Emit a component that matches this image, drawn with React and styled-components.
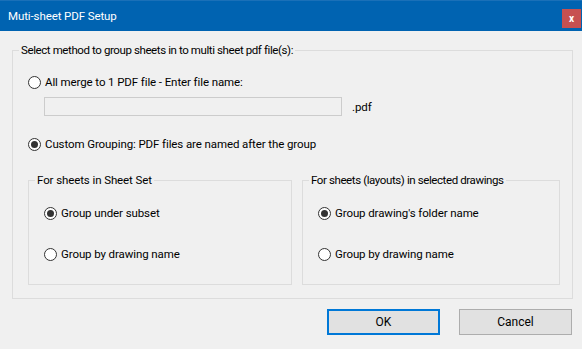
import React from 'react'
import styled, { createGlobalStyle } from 'styled-components'

const GlobalStyle = createGlobalStyle`
  html, body {
    margin: 0;
    padding: 0;
    background: #f0f0f0;
  }
  body {
    font-family: Roboto, "Liberation Sans", sans-serif;
    font-size: 11.5px;
    letter-spacing: -0.1px;
    color: #000;
  }
`

const App = () => {
  const [mode, setMode] = React.useState('custom')
  const [sheetSet, setSheetSet] = React.useState('subset')
  const [layouts, setLayouts] = React.useState('folder')

  return (
    <Window>
      <GlobalStyle />
      <TitleBar>
        <Title>Muti-sheet PDF Setup</Title>
        <CloseButton>x</CloseButton>
      </TitleBar>

      <Content>
        <Group>
          <Legend tight>Select method to group sheets in to multi sheet pdf file(s):</Legend>
          <GroupBody>
            <Radio
              label="All merge to 1 PDF file - Enter file name:"
              checked={mode === 'merge'}
              onChange={() => setMode('merge')}
            />
            <InputRow>
              <FileInput disabled />
              <Suffix>.pdf</Suffix>
            </InputRow>
            <Radio
              label="Custom Grouping: PDF files are named after the group"
              checked={mode === 'custom'}
              onChange={() => setMode('custom')}
              spaced
            />
            <SubGroups>
              <SubGroup width="264px">
                <Legend>For sheets in Sheet Set</Legend>
                <SubGroupBody>
                  <Radio
                    label="Group under subset"
                    checked={sheetSet === 'subset'}
                    onChange={() => setSheetSet('subset')}
                  />
                  <Radio
                    label="Group by drawing name"
                    checked={sheetSet === 'name'}
                    onChange={() => setSheetSet('name')}
                  />
                </SubGroupBody>
              </SubGroup>
              <SubGroup>
                <Legend tight>For sheets (layouts) in selected drawings</Legend>
                <SubGroupBody>
                  <Radio
                    label="Group drawing's folder name"
                    checked={layouts === 'folder'}
                    onChange={() => setLayouts('folder')}
                  />
                  <Radio
                    label="Group by drawing name"
                    checked={layouts === 'name'}
                    onChange={() => setLayouts('name')}
                  />
                </SubGroupBody>
              </SubGroup>
            </SubGroups>
          </GroupBody>
        </Group>

        <ButtonRow>
          <Button primary>OK</Button>
          <Button>Cancel</Button>
        </ButtonRow>
      </Content>
    </Window>
  )
}

const Radio = ({ label, checked, onChange, spaced }) => (
  <RadioLabel spaced={spaced} onClick={onChange}>
    <RadioCircle checked={checked} />
    <span>{label}</span>
  </RadioLabel>
)

const Window = styled.div`
  width: 582px;
  height: 349px;
  display: flex;
  flex-direction: column;
  background: #f0f0f0;
  overflow: hidden;
`
const TitleBar = styled.div`
  height: 31px;
  display: flex;
  align-items: flex-start;
  justify-content: space-between;
  background: #0063b1;
  border-top: 1px solid #1a70b8;
  box-sizing: border-box;
  padding: 0 1px 0 8px;
`
const Title = styled.div`
  color: #fff;
  font-size: 11.5px;
  line-height: 30px;
`
const CloseButton = styled.div`
  width: 19px;
  height: 19px;
  margin-top: 8px;
  background: #c75050;
  color: #fff;
  font-size: 10px;
  font-weight: bold;
  display: flex;
  align-items: center;
  justify-content: center;
`
const Content = styled.div`
  padding: 11px 9px 0 12px;
  display: flex;
  flex-direction: column;
`
const Group = styled.fieldset`
  margin: 0;
  padding: 0;
  min-width: 0;
  border: 1px solid #dcdcdc;
`
const Legend = styled.legend`
  margin-left: 6px;
  padding: 0 2px;
  line-height: 16px;
  letter-spacing: ${props => (props.tight ? '-0.4px' : '-0.1px')};
`
const GroupBody = styled.div`
  padding: 16px 12px 13px 15px;
  display: flex;
  flex-direction: column;
`
const RadioLabel = styled.label`
  display: flex;
  align-items: center;
  gap: 4px;
  height: 16px;
  margin-top: ${props => (props.spaced ? '20px' : '0')};
  cursor: default;
`
const RadioCircle = styled.span`
  width: 13px;
  height: 13px;
  box-sizing: border-box;
  border-radius: 50%;
  border: 1px solid #333;
  background: #fff;
  display: flex;
  align-items: center;
  justify-content: center;
  flex: none;
  &::after {
    content: '';
    width: 7px;
    height: 7px;
    border-radius: 50%;
    background: ${props => (props.checked ? '#333' : 'transparent')};
  }
`
const InputRow = styled.div`
  display: flex;
  align-items: center;
  margin: 7px 0 0 16px;
`
const FileInput = styled.input`
  width: 298px;
  height: 19px;
  box-sizing: border-box;
  margin: 0;
  border: 1px solid #cccccc;
  background: #f0f0f0;
`
const Suffix = styled.span`
  margin-left: 10px;
`
const SubGroups = styled.div`
  display: flex;
  gap: 10px;
  margin-top: 20px;
`
const SubGroup = styled.fieldset`
  margin: 0;
  padding: 0;
  min-width: 0;
  border: 1px solid #dcdcdc;
  width: ${props => props.width || 'auto'};
  flex: ${props => (props.width ? 'none' : '1')};
  box-sizing: border-box;
`
const SubGroupBody = styled.div`
  padding: 17px 14px 22px 15px;
  display: flex;
  flex-direction: column;
  gap: 25px;
`
const ButtonRow = styled.div`
  display: flex;
  justify-content: flex-end;
  gap: 19px;
  margin-top: 10px;
  padding-right: 1px;
`
const Button = styled.button`
  width: 113px;
  height: 26px;
  box-sizing: border-box;
  margin: 0;
  font: inherit;
  font-size: 12px;
  background: #e1e1e1;
  border: ${props => (props.primary ? '2px solid #0078d7' : '1px solid #adadad')};
`

export default App
